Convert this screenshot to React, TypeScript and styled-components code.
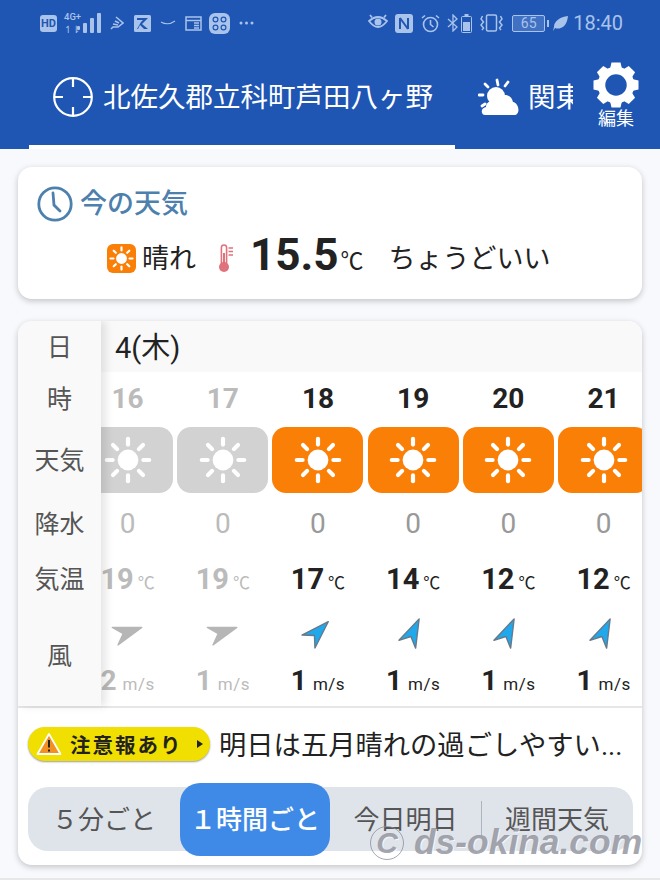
import React from "react";
import styled, { createGlobalStyle } from "styled-components";

const FONT = `Roboto, "Noto Sans CJK JP", "Noto Sans", sans-serif`;
const STATUS_TINT = "#a9c3ea";

type HourData = {
  hour: number;
  temp: number;
  speed: number;
  heading: number;
  past?: boolean;
};

const HOURS: HourData[] = [
  { hour: 16, temp: 19, speed: 2, heading: 72, past: true },
  { hour: 17, temp: 19, speed: 1, heading: 72, past: true },
  { hour: 18, temp: 17, speed: 1, heading: 45 },
  { hour: 19, temp: 14, speed: 1, heading: 25 },
  { hour: 20, temp: 12, speed: 1, heading: 25 },
  { hour: 21, temp: 12, speed: 1, heading: 25 },
];

const GlobalStyle = createGlobalStyle`
  html, body {
    margin: 0;
    padding: 0;
    background: #f8f9fc;
  }
  body {
    font-family: ${FONT};
    color: #222;
  }
`;

const Page = styled.div`
  width: 660px;
  height: 880px;
  overflow: hidden;
`;

/* header */
const Header = styled.header`
  height: 149px;
  background: #1f56b4;
  display: flex;
  flex-direction: column;
`;

const StatusBar = styled.div`
  height: 46px;
  padding: 0 37px 0 40px;
  display: flex;
  align-items: center;
  justify-content: space-between;
  color: ${STATUS_TINT};
`;

const StatusGroup = styled.div`
  display: flex;
  align-items: center;
`;

const HdBadge = styled.span`
  width: 17px;
  height: 17px;
  border-radius: 3px;
  background: ${STATUS_TINT};
  color: #1f56b4;
  font-size: 11px;
  font-weight: 700;
  line-height: 17px;
  text-align: center;
`;

const NetworkStack = styled.span`
  width: 16px;
  margin-left: 7px;
  margin-right: -3px;
  font-size: 9.5px;
  line-height: 13px;
  font-weight: 500;
  display: flex;
  flex-direction: column;
`;

const BatteryBox = styled.span`
  width: 31px;
  height: 15px;
  margin-left: 9px;
  border: 1px solid ${STATUS_TINT};
  background: rgba(169, 195, 234, 0.25);
  border-radius: 2px;
  font-size: 14px;
  line-height: 15px;
  text-align: center;
  position: relative;
  &::after {
    content: "";
    position: absolute;
    right: -5px;
    top: 4px;
    width: 2px;
    height: 7px;
    background: ${STATUS_TINT};
  }
`;

const LeafMark = styled.svg`
  margin: 0 6px 0 8px;
`;

const Clock = styled.span`
  font-size: 20px;
  margin-left: -1px;
`;

const TabBar = styled.div`
  flex: 1;
  display: flex;
  color: #fff;
`;

const TabScroller = styled.div`
  width: 573px;
  padding-left: 29px;
  box-sizing: border-box;
  overflow: hidden;
  display: flex;
`;

const Tab = styled.div<{ $active?: boolean }>`
  flex: none;
  display: flex;
  align-items: center;
  gap: ${(p) => (p.$active ? 10 : 8)}px;
  padding: 3px 22px 0 ${(p) => (p.$active ? 24 : 23)}px;
  border-bottom: 4px solid ${(p) => (p.$active ? "#fff" : "transparent")};
  font-size: 27.5px;
  white-space: nowrap;
`;

const TabLabel = styled.span`
  margin-bottom: 4px;
`;

const EditButton = styled.div`
  flex: 1;
  display: flex;
  flex-direction: column;
  align-items: center;
  padding: 16px 1px 0 0;
  font-size: 18px;
  line-height: 22px;
`;

/* cards */
const Main = styled.main`
  padding: 18px 18px 0;
  display: flex;
  flex-direction: column;
  gap: 22px;
`;

const Card = styled.section`
  background: #fff;
  border-radius: 14px;
  box-shadow: 0 2px 6px rgba(0, 0, 0, 0.22);
`;

const NowCard = styled(Card)`
  height: 132px;
  padding: 19px 19px 0;
  box-sizing: border-box;
`;

const NowTitle = styled.h2`
  margin: 0;
  display: flex;
  align-items: center;
  gap: 7px;
  color: #4d80ad;
  font-size: 27px;
  font-weight: 500;
  line-height: 36px;
`;

const NowRow = styled.div`
  margin: 14px 0 0 70px;
  display: flex;
  align-items: center;
  height: 44px;
  font-size: 27px;
`;

const NowText = styled.span`
  margin-bottom: 4px;
`;

const WeatherChip = styled.span`
  width: 29px;
  height: 29px;
  border-radius: 6px;
  background: #f97f06;
  display: flex;
  align-items: center;
  justify-content: center;
  margin-right: 6px;
`;

const ThermometerIcon = styled.svg`
  margin-left: 23px;
`;

const Reading = styled.span`
  font-size: 44px;
  font-weight: 700;
  margin: 0 0 6px 17px;
`;

const ReadingUnit = styled.span`
  font-size: 23px;
  margin: 2px 25px 0 2px;
`;

const ForecastCard = styled(Card)`
  height: 544px;
  overflow: hidden;
  display: flex;
  flex-direction: column;
`;

const ForecastTable = styled.div`
  height: 385px;
  display: grid;
  grid-template-columns: 83px 541px;
  border-bottom: 2px solid #e6e6e6;
  box-sizing: content-box;
`;

const LabelColumn = styled.div`
  background: #f9f9f9;
  position: relative;
  z-index: 1;
  box-shadow: 5px 0 8px rgba(0, 0, 0, 0.1);
  display: flex;
  flex-direction: column;
`;

const LabelCell = styled.div<{ $h: number }>`
  height: ${(p) => p.$h}px;
  padding-bottom: 4px;
  box-sizing: border-box;
  display: flex;
  align-items: center;
  justify-content: center;
  color: #555;
  font-size: 25px;
`;

const TableBody = styled.div`
  overflow: hidden;
`;

const DateBar = styled.div`
  height: 51px;
  padding: 0 0 4px 14px;
  box-sizing: border-box;
  background: #f9f9f9;
  display: flex;
  align-items: center;
  font-size: 29px;
`;

const HourTrack = styled.div`
  margin-left: -21px;
  display: flex;
`;

const HourColumn = styled.div<{ $past?: boolean }>`
  flex: none;
  width: 95.2px;
  display: flex;
  flex-direction: column;
  align-items: center;
  color: ${(p) => (p.$past ? "#bbb" : "#222")};
`;

const HourCell = styled.div`
  height: 53px;
  display: flex;
  align-items: center;
  font-size: 28px;
  font-weight: 700;
`;

const WeatherTile = styled.div<{ $past?: boolean }>`
  width: 91px;
  height: 66px;
  margin: 2px 0;
  border-radius: 14px;
  background: ${(p) => (p.$past ? "#d2d2d2" : "#f97f06")};
  display: flex;
  align-items: center;
  justify-content: center;
`;

const RainCell = styled.div<{ $past?: boolean }>`
  height: 57px;
  display: flex;
  align-items: center;
  font-size: 28px;
  color: ${(p) => (p.$past ? "#bbb" : "#999")};
`;

const TempCell = styled.div`
  height: 54px;
  display: flex;
  align-items: center;
  gap: 4px;
  font-size: 29px;
  font-weight: 700;
`;

const ValueUnit = styled.span`
  font-size: 17px;
  font-weight: 400;
  margin-top: 5px;
`;

const WindArrowCell = styled.div`
  height: 51px;
  display: flex;
  align-items: center;
`;

const WindSpeedCell = styled.div`
  height: 49px;
  padding-top: 3px;
  box-sizing: border-box;
  display: flex;
  align-items: flex-start;
  gap: 6px;
  font-size: 28px;
  line-height: 42px;
  font-weight: 700;
  & > span {
    line-height: 48px;
    margin-top: 0;
    letter-spacing: 0.5px;
  }
`;

/* notice line */
const NoticeRow = styled.div`
  height: 72px;
  padding: 0 0 0 10px;
  display: flex;
  align-items: center;
  gap: 9px;
`;

const NoticePill = styled.div`
  width: 182px;
  height: 34px;
  box-sizing: border-box;
  padding: 0 7px 0 8px;
  border-radius: 17px;
  background: #f0df00;
  box-shadow: 0 1px 2px rgba(0, 0, 0, 0.4);
  display: flex;
  align-items: center;
  font-size: 20.5px;
  font-weight: 700;
  letter-spacing: 2px;
  color: #222;
  gap: 8px;
`;

const PillCaret = styled.span`
  width: 0;
  height: 0;
  margin-left: auto;
  border-left: 6px solid #222;
  border-top: 4px solid transparent;
  border-bottom: 4px solid transparent;
`;

const NoticeText = styled.div`
  width: 410px;
  padding-bottom: 3px;
  font-size: 27.3px;
  white-space: nowrap;
  overflow: hidden;
  color: #222;
`;

/* interval switch */
const IntervalTrack = styled.div`
  position: relative;
  margin: 7px 9px 0 10px;
  height: 64px;
  padding: 0 9px 0 0;
  border-radius: 20px;
  background: #dfe3ea;
  display: grid;
  grid-template-columns: 152px 150px 151px 152px;
  grid-template-rows: 64px;
  align-items: center;
`;

const IntervalOption = styled.div<{ $active?: boolean; $divided?: boolean }>`
  height: ${(p) => (p.$active ? 73 : 64)}px;
  padding-bottom: 3px;
  box-sizing: border-box;
  display: flex;
  align-items: center;
  justify-content: center;
  font-size: 26px;
  white-space: nowrap;
  color: ${(p) => (p.$active ? "#fff" : "#555")};
  font-weight: ${(p) => (p.$active ? 500 : 400)};
  background: ${(p) => (p.$active ? "#3f8ae6" : "transparent")};
  border-radius: ${(p) => (p.$active ? 20 : 0)}px;
  position: relative;
  ${(p) =>
    p.$divided &&
    `&::before {
      content: "";
      position: absolute;
      left: 0;
      top: 14px;
      bottom: 14px;
      width: 1px;
      background: #aeb4bd;
    }`}
`;

const NextCardEdge = styled.div`
  height: 12px;
  margin: -9px -18px 0;
  background: #fff;
  border-top: 2px solid #e8e8e8;
`;

/* site mark laid over the lower corner */
const SiteMark = styled.div`
  position: absolute;
  left: 370px;
  top: 822px;
  display: flex;
  align-items: center;
  gap: 10px;
  color: rgba(140, 142, 152, 0.78);
  font-family: "Liberation Sans", sans-serif;
  font-style: italic;
  font-weight: 700;
  font-size: 35.4px;
  white-space: nowrap;
  text-shadow: 1px 1px 0 rgba(255, 255, 255, 0.7);
  pointer-events: none;
`;

const MarkCircle = styled.span`
  width: 32px;
  height: 32px;
  border: 1px solid rgba(140, 142, 152, 0.78);
  border-radius: 50%;
  display: flex;
  align-items: center;
  justify-content: center;
  font-size: 30px;
`;

const SunRays = ({ size, color }: { size: number; color: string }) => (
  <svg width={size} height={size} viewBox="0 0 48 48">
    <circle cx="24" cy="24" r="10.4" fill={color} />
    {[0, 45, 90, 135, 180, 225, 270, 315].map((a) => (
      <line
        key={a}
        x1="24"
        y1="2.8"
        x2="24"
        y2="8.6"
        stroke={color}
        strokeWidth="4.2"
        strokeLinecap="round"
        transform={`rotate(${a} 24 24)`}
      />
    ))}
  </svg>
);

const WindArrow = ({ heading, past }: { heading: number; past?: boolean }) => (
  <svg width="32" height="32" viewBox="0 0 32 32" style={{ transform: `rotate(${heading}deg)` }}>
    <path
      d="M16 1.5 L6.8 29.5 L16 21 L25.2 29.5 Z"
      fill={past ? "#b6b6b6" : "#20a8ec"}
      stroke={past ? "#b6b6b6" : "#667a8c"}
      strokeWidth="1.4"
      strokeLinejoin="round"
    />
  </svg>
);

const SignalBars = () => (
  <svg width="25" height="22" viewBox="0 0 25 22" fill={STATUS_TINT}>
    <rect x="0" y="14" width="3" height="4" rx="1" />
    <rect x="6" y="11" width="4" height="10" rx="1" />
    <rect x="13" y="6" width="4" height="15" rx="1" />
    <rect x="20" y="1" width="4" height="20" rx="1" />
  </svg>
);

const StatusLeftIcons = () => (
  <>
    <svg width="14" height="16" viewBox="0 0 14 16" fill="none" stroke={STATUS_TINT} strokeWidth="1.5" style={{ marginLeft: 8 }}>
      <path d="M6 2 L13 8 L8 12 L3 12 L1 14 M3 9 L8 10 M5 6 L9 8" />
    </svg>
    <svg width="17" height="17" viewBox="0 0 17 17" style={{ marginLeft: 10 }}>
      <rect width="17" height="17" rx="1.5" fill={STATUS_TINT} />
      <path d="M3 3 H14 L8 9 L14 14 H10 L6 10 L4 14 H3 L7 7 L9 5 H3 Z" fill="#1f56b4" />
    </svg>
    <svg width="16" height="6" viewBox="0 0 16 6" fill="none" stroke={STATUS_TINT} strokeWidth="1.1" style={{ marginLeft: 9 }}>
      <path d="M1 2 Q8 6 15 1" />
    </svg>
    <svg width="17" height="15" viewBox="0 0 17 15" fill="none" stroke={STATUS_TINT} strokeWidth="1.5" style={{ marginLeft: 9 }}>
      <rect x="1" y="1" width="15" height="13" />
      <path d="M1 4.5 H16 M9 7 H14 M9 9.5 H14 M9 12 H14" />
    </svg>
    <svg width="21" height="21" viewBox="0 0 21 21" fill="none" style={{ marginLeft: 7 }}>
      <rect width="21" height="21" rx="6" fill={STATUS_TINT} />
      <g stroke="#1f56b4" strokeWidth="1.2">
        <circle cx="6.5" cy="6.5" r="2.4" />
        <circle cx="14.5" cy="6.5" r="2.4" />
        <circle cx="6.5" cy="14.5" r="2.4" />
        <circle cx="14.5" cy="14.5" r="2.4" />
      </g>
    </svg>
    <svg width="15" height="4" viewBox="0 0 15 4" fill={STATUS_TINT} style={{ marginLeft: 9 }}>
      <circle cx="2" cy="2" r="1.5" />
      <circle cx="7.5" cy="2" r="1.5" />
      <circle cx="13" cy="2" r="1.5" />
    </svg>
  </>
);

const StatusRightIcons = () => (
  <>
    <svg width="20" height="18" viewBox="0 0 20 18" fill="none" stroke={STATUS_TINT} strokeWidth="1.8">
      <path d="M1 7 Q10 -1 19 7 Q10 19 1 7 Z" />
      <circle cx="10" cy="8" r="2.6" fill={STATUS_TINT} />
      <path d="M2 1 L4 3.5 M18 1 L16 3.5" />
    </svg>
    <svg width="18" height="19" viewBox="0 0 18 19" style={{ marginLeft: 7 }}>
      <rect width="18" height="19" rx="3" fill={STATUS_TINT} />
      <path d="M5 4 V15 M13 4 V15 M5 4 L13 15" stroke="#1f56b4" strokeWidth="2" fill="none" />
    </svg>
    <svg width="19" height="19" viewBox="0 0 19 19" fill="none" stroke={STATUS_TINT} strokeWidth="1.6" style={{ marginLeft: 8 }}>
      <circle cx="9.5" cy="10.5" r="7" />
      <path d="M9.5 6 V10.5 L12.5 13 M1 4 L4 1.5 M18 4 L15 1.5" />
    </svg>
    <svg width="13" height="18" viewBox="0 0 13 18" fill="none" stroke={STATUS_TINT} strokeWidth="1.3" style={{ marginLeft: 7 }}>
      <path d="M1 5 L10 13 L6 17 V1 L10 5 L1 13" />
    </svg>
    <svg width="11" height="19" viewBox="0 0 11 19" style={{ marginLeft: 1 }}>
      <rect x="0.5" y="2.5" width="10" height="16" rx="1" fill="none" stroke={STATUS_TINT} />
      <rect x="3.5" y="0" width="4" height="2" fill={STATUS_TINT} />
      <rect x="2" y="8" width="7" height="9" fill={STATUS_TINT} />
    </svg>
    <svg width="23" height="18" viewBox="0 0 23 18" fill="none" stroke={STATUS_TINT} strokeWidth="1.5" style={{ marginLeft: 8 }}>
      <rect x="6.5" y="1" width="10" height="16" rx="1.5" />
      <path d="M2.5 2 L1 5 L3.5 8 L1 11 L3.5 14 L2 16 M20.5 2 L22 5 L19.5 8 L22 11 L19.5 14 L21 16" />
    </svg>
  </>
);

const CloudSun = () => (
  <svg width="42" height="38" viewBox="0 0 42 38" fill="#fff">
    <g stroke="#fff" strokeWidth="2.8" strokeLinecap="round">
      <line x1="19" y1="2" x2="20" y2="7" />
      <line x1="7" y1="6" x2="10" y2="9" />
      <line x1="1" y1="17" x2="5" y2="17" />
      <line x1="4" y1="28" x2="7" y2="26" />
      <line x1="30" y1="4" x2="27" y2="8" />
    </g>
    <circle cx="18" cy="18" r="9" />
    <path d="M7 37 C3 37 2 30 8 29 C8 23 15 22 18 25 C20 15 33 14 35 24 C41 25 43 37 36 37 Z" />
  </svg>
);

const GearIcon = () => (
  <svg width="46" height="46" viewBox="0 0 46 46">
    <circle cx="23" cy="23" r="14.5" fill="none" stroke="#fff" strokeWidth="7.5" />
    {[0, 45, 90, 135, 180, 225, 270, 315].map((a) => (
      <path key={a} d="M18.5 0.5 H27.5 L29 7 H17 Z" fill="#fff" transform={`rotate(${a} 23 23)`} />
    ))}
  </svg>
);

const Reticle = () => (
  <svg width="40" height="40" viewBox="0 0 40 40" fill="none" stroke="#fff" strokeWidth="2.2">
    <circle cx="20" cy="20" r="18.8" />
    <path d="M20 1 V10 M20 30 V39 M1 20 H10 M30 20 H39" />
  </svg>
);

const ClockIcon = () => (
  <svg width="36" height="36" viewBox="0 0 36 36" fill="none" stroke="#4d80ad" strokeWidth="2.8">
    <circle cx="18" cy="18" r="16.2" />
    <path d="M16 7 L17 19 L23 25" strokeLinecap="round" />
  </svg>
);

const Thermometer = () => (
  <ThermometerIcon width="14" height="29" viewBox="0 0 14 29">
    <rect x="2.4" y="1" width="5.2" height="20" rx="2.6" fill="#fff" stroke="#e0727c" strokeWidth="1.6" />
    <rect x="4" y="9" width="2" height="11" fill="#e0727c" />
    <circle cx="5" cy="23" r="5" fill="#e0727c" />
    <path d="M9.5 4 H14 M9.5 7.5 H14 M9.5 11 H14" stroke="#e0727c" strokeWidth="1.6" />
  </ThermometerIcon>
);

const WarningTriangle = () => (
  <svg width="26" height="24" viewBox="0 0 26 24">
    <path d="M13 2 L24.5 22 H1.5 Z" fill="#f39020" stroke="#fff" strokeWidth="1.8" strokeLinejoin="round" />
    <path d="M13 8 V15.5 M13 17.5 V19.5" stroke="#222" strokeWidth="2" />
  </svg>
);

export default function App() {
  return (
    <Page>
      <GlobalStyle />
      <Header>
        <StatusBar>
          <StatusGroup>
            <HdBadge>HD</HdBadge>
            <NetworkStack>
              <span>4G+</span>
              <span>↿⇂</span>
            </NetworkStack>
            <SignalBars />
            <StatusLeftIcons />
          </StatusGroup>
          <StatusGroup>
            <StatusRightIcons />
            <BatteryBox>65</BatteryBox>
            <LeafMark width="15" height="15" viewBox="0 0 15 15" fill={STATUS_TINT}>
              <path d="M15 0 C14 11 7 14 2 12 L0 15 L1 11 C1 5 7 1 15 0 Z" />
            </LeafMark>
            <Clock>18:40</Clock>
          </StatusGroup>
        </StatusBar>
        <TabBar>
          <TabScroller>
            <Tab $active>
              <Reticle />
              <TabLabel>北佐久郡立科町芦田八ヶ野</TabLabel>
            </Tab>
            <Tab>
              <CloudSun />
              <TabLabel>関東甲信</TabLabel>
            </Tab>
          </TabScroller>
          <EditButton>
            <GearIcon />
            編集
          </EditButton>
        </TabBar>
      </Header>

      <Main>
        <NowCard>
          <NowTitle>
            <ClockIcon />
            今の天気
          </NowTitle>
          <NowRow>
            <WeatherChip>
              <SunRays size={25} color="#fff" />
            </WeatherChip>
            <NowText>晴れ</NowText>
            <Thermometer />
            <Reading>15.5</Reading>
            <ReadingUnit>℃</ReadingUnit>
            <NowText>ちょうどいい</NowText>
          </NowRow>
        </NowCard>

        <ForecastCard>
          <ForecastTable>
            <LabelColumn>
              <LabelCell $h={51}>日</LabelCell>
              <LabelCell $h={53}>時</LabelCell>
              <LabelCell $h={70}>天気</LabelCell>
              <LabelCell $h={57}>降水</LabelCell>
              <LabelCell $h={54}>気温</LabelCell>
              <LabelCell $h={100}>風</LabelCell>
            </LabelColumn>
            <TableBody>
              <DateBar>4(木)</DateBar>
              <HourTrack>
                {HOURS.map((h) => (
                  <HourColumn key={h.hour} $past={h.past}>
                    <HourCell>{h.hour}</HourCell>
                    <WeatherTile $past={h.past}>
                      <SunRays size={48} color="#fff" />
                    </WeatherTile>
                    <RainCell $past={h.past}>0</RainCell>
                    <TempCell>
                      {h.temp}
                      <ValueUnit>℃</ValueUnit>
                    </TempCell>
                    <WindArrowCell>
                      <WindArrow heading={h.heading} past={h.past} />
                    </WindArrowCell>
                    <WindSpeedCell>
                      {h.speed}
                      <ValueUnit>m/s</ValueUnit>
                    </WindSpeedCell>
                  </HourColumn>
                ))}
              </HourTrack>
            </TableBody>
          </ForecastTable>

          <NoticeRow>
            <NoticePill>
              <WarningTriangle />
              注意報あり
              <PillCaret />
            </NoticePill>
            <NoticeText>明日は五月晴れの過ごしやすい...</NoticeText>
          </NoticeRow>

          <IntervalTrack>
            <IntervalOption>５分ごと</IntervalOption>
            <IntervalOption $active>１時間ごと</IntervalOption>
            <IntervalOption>今日明日</IntervalOption>
            <IntervalOption $divided>週間天気</IntervalOption>
          </IntervalTrack>
        </ForecastCard>
        <NextCardEdge />
      </Main>

      <SiteMark>
        <MarkCircle>C</MarkCircle>
        ds-okina.com
      </SiteMark>
    </Page>
  );
}
